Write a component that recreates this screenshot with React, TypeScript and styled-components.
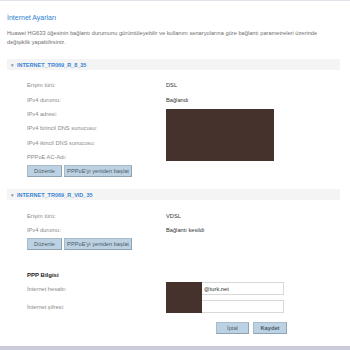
import styled, { createGlobalStyle } from "styled-components";

const GlobalStyle = createGlobalStyle`
  html, body {
    margin: 0;
    padding: 0;
    background: #fff;
    font-family: "Liberation Sans", Arial, sans-serif;
  }
`;

export default function App() {
  return (
    <>
      <GlobalStyle />
      <Page>
        <TopLine />
        <Content>
          <Title>İnternet Ayarları</Title>
          <Desc>
            Huawei HG633 öğesinin bağlantı durumunu görüntüleyebilir ve kullanım senaryolarına göre bağlantı
            parametreleri üzerinde değişiklik yapabilirsiniz.
          </Desc>

          <SectionHead>
            <Caret>▾</Caret>INTERNET_TR069_R_8_35
          </SectionHead>
          <Body>
            <InfoGrid>
              <Label>Erişim türü:</Label>
              <Value>DSL</Value>
              <Label>IPv4 durumu:</Label>
              <Value>Bağlandı</Value>
              <Label>IPv4 adresi:</Label>
              <Masked $rows={4} />
              <Label>IPv4 birincil DNS sunucusu:</Label>
              <Label>IPv4 ikincil DNS sunucusu:</Label>
              <Label>PPPoE AC-Adı:</Label>
            </InfoGrid>
            <BtnRow>
              <Btn $min={35}>Düzenle</Btn>
              <Btn $min={68}>PPPoE'yi yeniden başlat</Btn>
            </BtnRow>
          </Body>

          <SectionHead>
            <Caret>▾</Caret>INTERNET_TR069_R_VID_35
          </SectionHead>
          <Body>
            <InfoGrid>
              <Label>Erişim türü:</Label>
              <Value>VDSL</Value>
              <Label>IPv4 durumu:</Label>
              <Value>Bağlantı kesildi</Value>
            </InfoGrid>
            <BtnRow>
              <Btn $min={35}>Düzenle</Btn>
              <Btn $min={68}>PPPoE'yi yeniden başlat</Btn>
            </BtnRow>
          </Body>

          <PppBlock>
            <SubTitle>PPP Bilgisi</SubTitle>
            <FormGrid>
              <Label>İnternet hesabı:</Label>
              <FieldWrap>
                <Input defaultValue="@turk.net" />
                <Cover />
              </FieldWrap>
              <Label>İnternet şifresi:</Label>
              <Input type="text" defaultValue="" />
            </FormGrid>
            <Actions>
              <Btn $min={33}>İptal</Btn>
              <Btn $min={34} $bold>Kaydet</Btn>
            </Actions>
          </PppBlock>
        </Content>
        <BottomBar />
      </Page>
    </>
  );
}

const Page = styled.div`
  width: 350px;
  height: 350px;
  display: flex;
  flex-direction: column;
  overflow: hidden;
`;

const TopLine = styled.div`
  height: 1px;
  background: #e2e2ea;
`;

const Content = styled.div`
  flex: 1;
  padding: 13px 10px 0 7px;
`;

const Title = styled.div`
  color: #2f7fd0;
  font-size: 7px;
  line-height: 8px;
`;

const Desc = styled.div`
  margin-top: 7px;
  color: #6f6f6f;
  font-size: 5.7px;
  line-height: 9px;
  width: 333px;
`;

const SectionHead = styled.div`
  margin-top: 12px;
  height: 11px;
  background: #f4f4f4;
  display: flex;
  align-items: center;
  padding-left: 4px;
  color: #3a84d4;
  font-size: 5.5px;
  font-weight: bold;
`;

const Caret = styled.span`
  color: #8aa0b0;
  font-size: 5px;
  margin-right: 3px;
`;

const Body = styled.div`
  padding: 8px 0 0 20px;
`;

const InfoGrid = styled.div`
  display: grid;
  grid-template-columns: 139px 108px;
  grid-auto-rows: 14.4px;
  align-items: center;
`;

const Label = styled.div`
  color: #8a8a8a;
  font-size: 5.7px;
`;

const Value = styled.div`
  color: #333;
  font-size: 5.7px;
`;

const Masked = styled.div<{ $rows: number }>`
  grid-column: 2;
  grid-row: span ${(p) => p.$rows};
  align-self: start;
  margin-top: 2px;
  height: 52px;
  background: #45322d;
`;

const BtnRow = styled.div`
  display: flex;
  gap: 2px;
  margin-top: 1px;
`;

const Btn = styled.button<{ $min?: number; $bold?: boolean }>`
  height: 12px;
  padding: 0 2px;
  min-width: ${(p) => (p.$min ? `${p.$min}px` : "auto")};
  border: 1px solid #a9bccb;
  border-right-color: #8ea3b4;
  border-bottom-color: #8ea3b4;
  background: #bcd2e3;
  color: #4a5a6a;
  font-family: "Liberation Sans", Arial, sans-serif;
  font-size: 5.7px;
  font-weight: ${(p) => (p.$bold ? "bold" : "normal")};
  cursor: pointer;
`;

const PppBlock = styled.div`
  margin-top: 21px;
  padding-left: 20px;
`;

const SubTitle = styled.div`
  color: #222;
  font-size: 6px;
  line-height: 8px;
  font-weight: bold;
`;

const FormGrid = styled.div`
  margin-top: 3px;
  display: grid;
  grid-template-columns: 139px 118px;
  row-gap: 5px;
  align-items: center;
`;

const FieldWrap = styled.div`
  position: relative;
  height: 13px;
`;

const Input = styled.input`
  box-sizing: border-box;
  display: block;
  width: 118px;
  height: 13px;
  margin: 0;
  border: 1px solid #d8d8d8;
  padding: 0 0 0 37px;
  font-family: "Liberation Sans", Arial, sans-serif;
  font-size: 5.7px;
  color: #333;
  outline: none;
`;

const Cover = styled.div`
  position: absolute;
  left: 0;
  top: 0;
  width: 36px;
  height: 31px;
  background: #45322d;
`;

const Actions = styled.div`
  display: flex;
  gap: 4px;
  margin: 9px 0 0 189px;
`;

const BottomBar = styled.div`
  height: 4px;
  background: #c9ccd8;
`;
